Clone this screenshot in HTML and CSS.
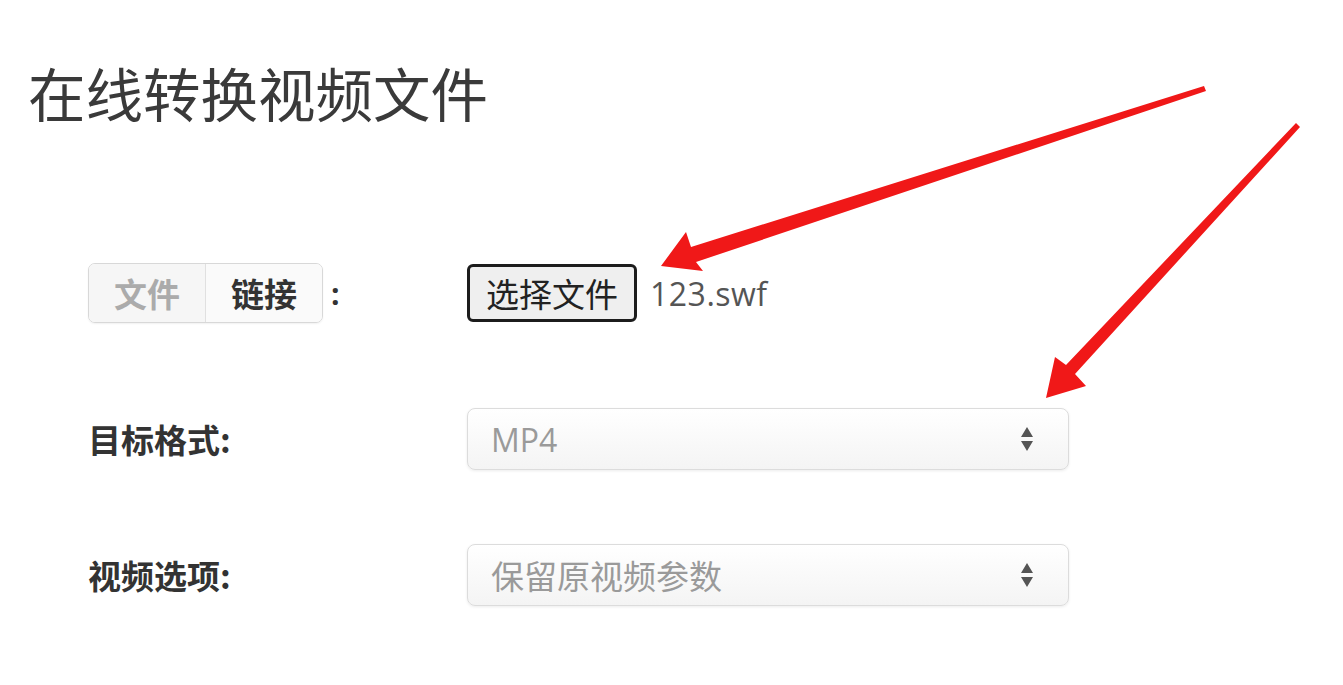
FILE: index.html
```html
<!DOCTYPE html>
<html lang="zh-CN">
<head>
<meta charset="utf-8">
<title>在线转换视频文件</title>
<link rel="stylesheet" href="styles.css">
</head>
<body>
<main class="page">
  <h1 class="title">在线转换视频文件</h1>
  <form class="form">
    <div class="row row-source">
      <div class="label-col">
        <div class="toggle">
          <span class="toggle-item toggle-off">文件</span>
          <span class="toggle-item toggle-on">链接</span>
        </div>
        <span class="colon">:</span>
      </div>
      <div class="control-col">
        <span class="file-btn">选择文件</span>
        <span class="file-name">123.swf</span>
      </div>
    </div>
    <div class="row row-format">
      <div class="label-col"><span class="label">目标格式:</span></div>
      <div class="control-col">
        <div class="select">
          <span class="select-text">MP4</span>
          <svg class="select-icon" width="14" height="26" viewBox="0 0 14 26"><path d="M7 1 L13 11 H1 Z M1 15 H13 L7 25 Z" fill="#555"/></svg>
        </div>
      </div>
    </div>
    <div class="row row-option">
      <div class="label-col"><span class="label">视频选项:</span></div>
      <div class="control-col">
        <div class="select">
          <span class="select-text select-cjk">保留原视频参数</span>
          <svg class="select-icon" width="14" height="26" viewBox="0 0 14 26"><path d="M7 1 L13 11 H1 Z M1 15 H13 L7 25 Z" fill="#555"/></svg>
        </div>
      </div>
    </div>
  </form>
  <svg class="arrows" width="1343" height="685" viewBox="0 0 1343 685">
    <polygon fill="#f01818" points="1204,86 691,247 686,232 661,266 703,271 696,262 1206,91"/>
    <polygon fill="#f01818" points="1296,123 1066,365 1055,357 1046,398 1086,386 1075,374 1300,127"/>
  </svg>
</main>
</body>
</html>
```

FILE: styles.css
```css
html, body {
  margin: 0;
  padding: 0;
  background: #ffffff;
}

.page {
  position: relative;
  width: 1343px;
  height: 685px;
  overflow: hidden;
  font-family: "Open Sans", "Noto Sans CJK SC", sans-serif;
  color: #333;
}

.title {
  margin: 0;
  padding: 57px 0 0 28px;
  font-family: "Noto Sans CJK SC", sans-serif;
  font-size: 57.5px;
  font-weight: 400;
  line-height: 70px;
  color: #3a3a3a;
}

.form {
  display: flex;
  flex-direction: column;
  padding: 135px 0 0 88px;
}

.row {
  display: flex;
  align-items: center;
  height: 62px;
}

.row-format {
  margin-top: 84px;
}

.row-option {
  margin-top: 74px;
}

.label-col {
  width: 379px;
  display: flex;
  align-items: center;
}

.control-col {
  display: flex;
  align-items: center;
}

.toggle {
  display: flex;
  height: 58px;
  border: 1px solid #d8d8d8;
  border-radius: 7px;
  overflow: hidden;
  box-shadow: 0 1px 2px rgba(0,0,0,0.06);
}

.toggle-item {
  width: 116px;
  display: flex;
  align-items: center;
  justify-content: center;
  font-family: "Noto Sans CJK SC", sans-serif;
  font-size: 33px;
}

.toggle-off {
  background: #f6f6f6;
  color: #ababab;
  font-weight: 700;
  border-right: 1px solid #e0e0e0;
}

.toggle-on {
  background: #fafafa;
  color: #333;
  font-weight: 700;
}

.colon {
  margin-left: 8px;
  font-size: 30px;
  color: #333;
  font-weight: 700;
}

.label {
  font-family: "Noto Sans CJK SC", sans-serif;
  font-size: 33px;
  font-weight: 700;
  color: #333;
}

.file-btn {
  box-sizing: border-box;
  height: 58px;
  width: 170px;
  display: flex;
  align-items: center;
  justify-content: center;
  border: 3px solid #1c1c1c;
  border-radius: 6px;
  background: #efefef;
  font-family: "Noto Sans CJK SC", sans-serif;
  font-size: 33px;
  color: #222;
}

.file-name {
  margin-left: 13px;
  font-size: 32px;
  letter-spacing: 0.5px;
  color: #555;
}

.select {
  box-sizing: border-box;
  width: 602px;
  height: 62px;
  display: flex;
  align-items: center;
  justify-content: space-between;
  padding: 0 34px 0 23px;
  border: 1px solid #dcdcdc;
  border-radius: 8px;
  background: linear-gradient(#ffffff, #f4f4f4);
  box-shadow: 0 1px 3px rgba(0,0,0,0.08);
}

.select-text {
  font-family: "Open Sans", "Noto Sans CJK SC", sans-serif;
  font-size: 32px;
  color: #9a9a9a;
}

.select-cjk {
  font-size: 33px;
}

.arrows {
  position: absolute;
  left: 0;
  top: 0;
  pointer-events: none;
}
```
